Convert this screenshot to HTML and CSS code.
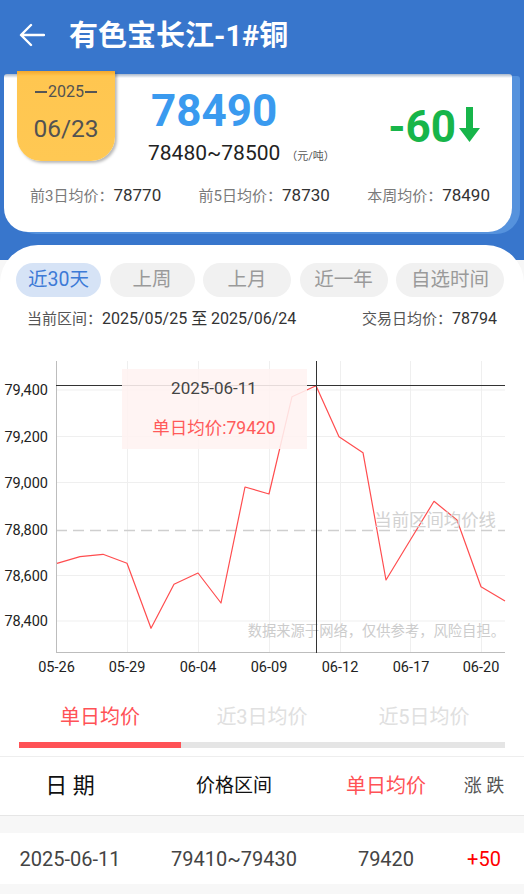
FILE: index.html
```html
<!DOCTYPE html>
<html lang="zh-CN">

<head>
    <meta charset="UTF-8">
    <meta name="viewport" content="width=device-width, initial-scale=1.0">
    <title>有色宝长江-1#铜</title>
    <link rel="stylesheet" href="styles.css">
</head>

<body>
    <!-- 顶部栏 -->
    <header class="appbar">
        <svg class="back" width="26" height="24" viewBox="0 0 26 24">
            <path d="M25 12H2.5M12 2L2 12l10 10" fill="none" stroke="#fff" stroke-width="2.4" stroke-linecap="round" stroke-linejoin="round"/>
        </svg>
        <h1 class="title">有色宝长江-1#铜</h1>
    </header>

    <!-- 今日价格卡片 -->
    <section class="hero">
        <div class="card">
            <div class="card-top">
                <div class="date-tag">
                    <span class="tag-year">2025</span>
                    <span class="tag-day">06/23</span>
                </div>
                <div class="price">
                    <div class="price-main">78490</div>
                    <div class="price-range">78480~78500<span class="unit">（元/吨）</span></div>
                </div>
                <div class="change">-60<svg class="down" width="21" height="35" viewBox="0 0 21 35">
                        <rect x="7" y="0" width="7" height="23" fill="#17b54a"/>
                        <polygon points="0,21 21,21 10.5,35" fill="#17b54a"/>
                    </svg></div>
            </div>
            <div class="stats">
                <div class="stat"><span class="stat-label">前3日均价：</span><span class="stat-value">78770</span></div>
                <div class="stat"><span class="stat-label">前5日均价：</span><span class="stat-value">78730</span></div>
                <div class="stat"><span class="stat-label">本周均价：</span><span class="stat-value">78490</span></div>
            </div>
        </div>
    </section>

    <main class="panel">
        <!-- 时间区间 -->
        <div class="pills">
            <span class="pill active">近30天</span>
            <span class="pill">上周</span>
            <span class="pill">上月</span>
            <span class="pill">近一年</span>
            <span class="pill">自选时间</span>
        </div>
        <div class="range">
            <span><span class="muted">当前区间：</span>2025/05/25 至 2025/06/24</span>
            <span><span class="muted">交易日均价：</span>78794</span>
        </div>

        <!-- 走势图 -->
        <svg class="chart" width="524" height="350" viewBox="0 0 524 350">
            <g class="grid">
                <line x1="56" y1="50" x2="505" y2="50"/>
                <line x1="56" y1="96.5" x2="505" y2="96.5"/>
                <line x1="56" y1="142.5" x2="505" y2="142.5"/>
                <line x1="56" y1="235.5" x2="505" y2="235.5"/>
                <line x1="56" y1="281" x2="505" y2="281"/>
                <line x1="127.5" y1="21" x2="127.5" y2="313"/>
                <line x1="198.5" y1="21" x2="198.5" y2="313"/>
                <line x1="269.5" y1="21" x2="269.5" y2="313"/>
                <line x1="340.5" y1="21" x2="340.5" y2="313"/>
                <line x1="410.5" y1="21" x2="410.5" y2="313"/>
                <line x1="481.5" y1="21" x2="481.5" y2="313"/>
            </g>
            <line class="avg" x1="56" y1="190.5" x2="505" y2="190.5"/>
            <g class="axis">
                <line x1="56.5" y1="21" x2="56.5" y2="313"/>
                <line x1="56" y1="312.5" x2="505" y2="312.5"/>
            </g>
            <g class="ylab">
                <text x="48" y="55">79,400</text>
                <text x="48" y="101.5">79,200</text>
                <text x="48" y="147.5">79,000</text>
                <text x="48" y="195">78,800</text>
                <text x="48" y="240.5">78,600</text>
                <text x="48" y="286">78,400</text>
            </g>
            <g class="xlab">
                <text x="56.5" y="332">05-26</text>
                <text x="127" y="332">05-29</text>
                <text x="198" y="332">06-04</text>
                <text x="269" y="332">06-09</text>
                <text x="340" y="332">06-12</text>
                <text x="411" y="332">06-17</text>
                <text x="481" y="332">06-20</text>
            </g>
            <polyline class="series" points="57,223.3 80,216.7 103,214.3 127,223.3 151,288.3 174,244.3 198,233 221,263 245,147 269,154 292,56.7 316,45.7 339,96.7 363,112.7 386,240 410,200.5 434,161.3 457,180 481,246.7 505,261"/>
            <text class="avg-label" x="496" y="186">当前区间均价线</text>
            <text class="source" x="505" y="296">数据来源于网络，仅供参考，风险自担。</text>
            <g class="cross">
                <line x1="316.5" y1="21" x2="316.5" y2="313"/>
                <line x1="56" y1="45.5" x2="505" y2="45.5"/>
            </g>
            <rect class="tip" x="122" y="29" width="185" height="80"/>
            <text class="tip-date" x="214" y="54">2025-06-11</text>
            <text class="tip-value" x="214" y="94">单日均价:79420</text>
        </svg>

        <!-- 均价切换 -->
        <div class="tabs">
            <span class="tab active">单日均价</span>
            <span class="tab">近3日均价</span>
            <span class="tab">近5日均价</span>
        </div>
        <div class="tab-bar"><span class="tab-bar-on"></span></div>

        <!-- 明细表 -->
        <div class="thead">
            <span class="th-date">日 期</span>
            <span class="th-range">价格区间</span>
            <span class="th-avg">单日均价</span>
            <span class="th-change">涨 跌</span>
        </div>
        <div class="gap"></div>
        <div class="row">
            <span>2025-06-11</span>
            <span>79410~79430</span>
            <span>79420</span>
            <span class="up">+50</span>
        </div>
        <div class="gap"></div>
    </main>
</body>

</html>
```

FILE: styles.css
```css
body {
    margin: 0;
    padding: 0;
    width: 524px;
    font-family: Roboto, "Noto Sans CJK SC", sans-serif;
    background: #f7f7f7;
    color: #333;
}

.appbar {
    height: 74px;
    background: #3876cc;
    display: flex;
    align-items: center;
    padding-left: 19px;
    box-sizing: border-box;
}

.back {
    display: block;
    margin-top: -4px;
}

.title {
    margin: -2px 0 0 24px;
    font-size: 29px;
    font-weight: bold;
    color: #fff;
    line-height: 34px;
}

.hero {
    background: #3876cc;
    padding: 0 12px 28px 4px;
}

.card {
    height: 158px;
    background: linear-gradient(#a9b7ca, #fff 4px);
    border-radius: 3px 3px 24px 24px;
    box-shadow: 8px 2px 0 #5592dd;
    box-sizing: border-box;
}

.card-top {
    height: 109px;
    display: flex;
    align-items: flex-start;
}

.date-tag {
    width: 98px;
    height: 90px;
    margin: -3px 0 0 13px;
    background: linear-gradient(#f3a72c, #ffc650 5px, #ffc853);
    border-radius: 0 0 24px 24px;
    box-shadow: 2px 2px 3px rgba(0, 0, 0, 0.28);
    display: flex;
    flex-direction: column;
    align-items: center;
    color: #525252;
}

.tag-year {
    margin-top: 11px;
    font-size: 16px;
    line-height: 20px;
    display: flex;
    align-items: center;
    gap: 1px;
}

.tag-year::before,
.tag-year::after {
    content: "";
    width: 12px;
    height: 1.5px;
    background: #555;
}

.tag-day {
    margin-top: 12px;
    font-size: 24.5px;
    line-height: 30px;
}

.price {
    margin: 15px 0 0 33px;
}

.price-main {
    font-size: 44px;
    line-height: 44px;
    font-weight: bold;
    color: #3a9aef;
    padding-left: 3px;
}

.price-range {
    margin-top: 8px;
    font-size: 21px;
    line-height: 24px;
    color: #222;
}

.unit {
    font-size: 11px;
    color: #555;
    margin-left: 6px;
}

.change {
    margin: 31px 32px 0 auto;
    font-size: 44px;
    line-height: 44px;
    font-weight: bold;
    color: #17b54a;
}

.down {
    margin-left: 3px;
}

.stats {
    display: flex;
    justify-content: space-between;
    padding: 0 22px 0 26px;
    line-height: 24px;
}

.stat-label {
    font-size: 15px;
    color: #7a7a7a;
}

.stat-value {
    font-size: 17px;
    color: #333;
}

.panel {
    margin-top: -15px;
    background: #fff;
    border-radius: 38px 38px 0 0;
    padding-top: 18px;
}

.pills {
    display: flex;
    justify-content: space-between;
    padding: 0 20px 0 16px;
}

.pill {
    height: 34px;
    line-height: 34px;
    border-radius: 17px;
    background: #f1f1f1;
    color: #9a9a9a;
    font-size: 19.5px;
    text-align: center;
    width: 85px;
}

.pill:nth-child(3),
.pill:nth-child(4) {
    width: 88px;
}

.pill:nth-child(5) {
    width: 108px;
}

.pill.active {
    background: #d6e3f6;
    color: #3d7ad6;
}

.range {
    display: flex;
    justify-content: space-between;
    margin-top: 11px;
    padding: 0 27px;
    font-size: 16px;
    line-height: 22px;
    color: #333;
}

.muted {
    font-size: 15px;
    color: #555;
}

.chart {
    display: block;
    margin-top: 10px;
}

.grid line {
    stroke: #efefef;
    stroke-width: 1;
}

.axis line {
    stroke: #bdbdbd;
    stroke-width: 1;
}

.avg {
    stroke: #cfcfcf;
    stroke-width: 1.5;
    stroke-dasharray: 11 6;
}

.ylab text {
    font-size: 14.5px;
    fill: #222;
    text-anchor: end;
}

.xlab text {
    font-size: 14.5px;
    fill: #222;
    text-anchor: middle;
}

.series {
    fill: none;
    stroke: #ff4d4f;
    stroke-width: 1.2;
    stroke-linejoin: round;
}

.avg-label {
    font-size: 17.4px;
    fill: #d2d2d2;
    text-anchor: end;
}

.source {
    font-size: 14.3px;
    fill: #cccccc;
    text-anchor: end;
}

.cross line {
    stroke: #333;
    stroke-width: 1;
}

.tip {
    fill: #fff2f1;
    opacity: 0.88;
}

.tip-date {
    font-size: 17px;
    fill: #444;
    text-anchor: middle;
}

.tip-value {
    font-size: 17.5px;
    fill: #ff5a5a;
    text-anchor: middle;
}

.tabs {
    display: grid;
    grid-template-columns: repeat(3, 1fr);
    margin: 10px 19px 0;
}

.tab {
    text-align: center;
    font-size: 20px;
    line-height: 34px;
    color: #e0e0e0;
}

.tab.active {
    color: #ff5256;
}

.tab-bar {
    margin: 8px 19px 0;
    height: 6px;
    background: #e5e5e5;
}

.tab-bar-on {
    display: block;
    width: 162px;
    height: 6px;
    background: #ff5256;
}

.thead,
.row {
    display: grid;
    grid-template-columns: 140px 188px 116px 1fr;
    align-items: center;
    text-align: center;
}

.thead {
    margin-top: 8px;
    height: 60px;
    border-top: 1px solid #eee;
    border-bottom: 1px solid #e6e6e6;
    line-height: 28px;
    padding-bottom: 1px;
    box-sizing: border-box;
}

.th-date {
    font-size: 22px;
    color: #111;
}

.th-range {
    font-size: 19px;
    color: #111;
}

.th-avg {
    font-size: 20px;
    color: #ff5256;
}

.th-change {
    font-size: 18px;
    color: #555;
}

.gap {
    height: 17px;
    background: #f7f7f7;
}

.row {
    height: 51px;
    background: #fff;
    font-size: 20px;
    color: #444;
}

.up {
    color: #f00;
}
```
